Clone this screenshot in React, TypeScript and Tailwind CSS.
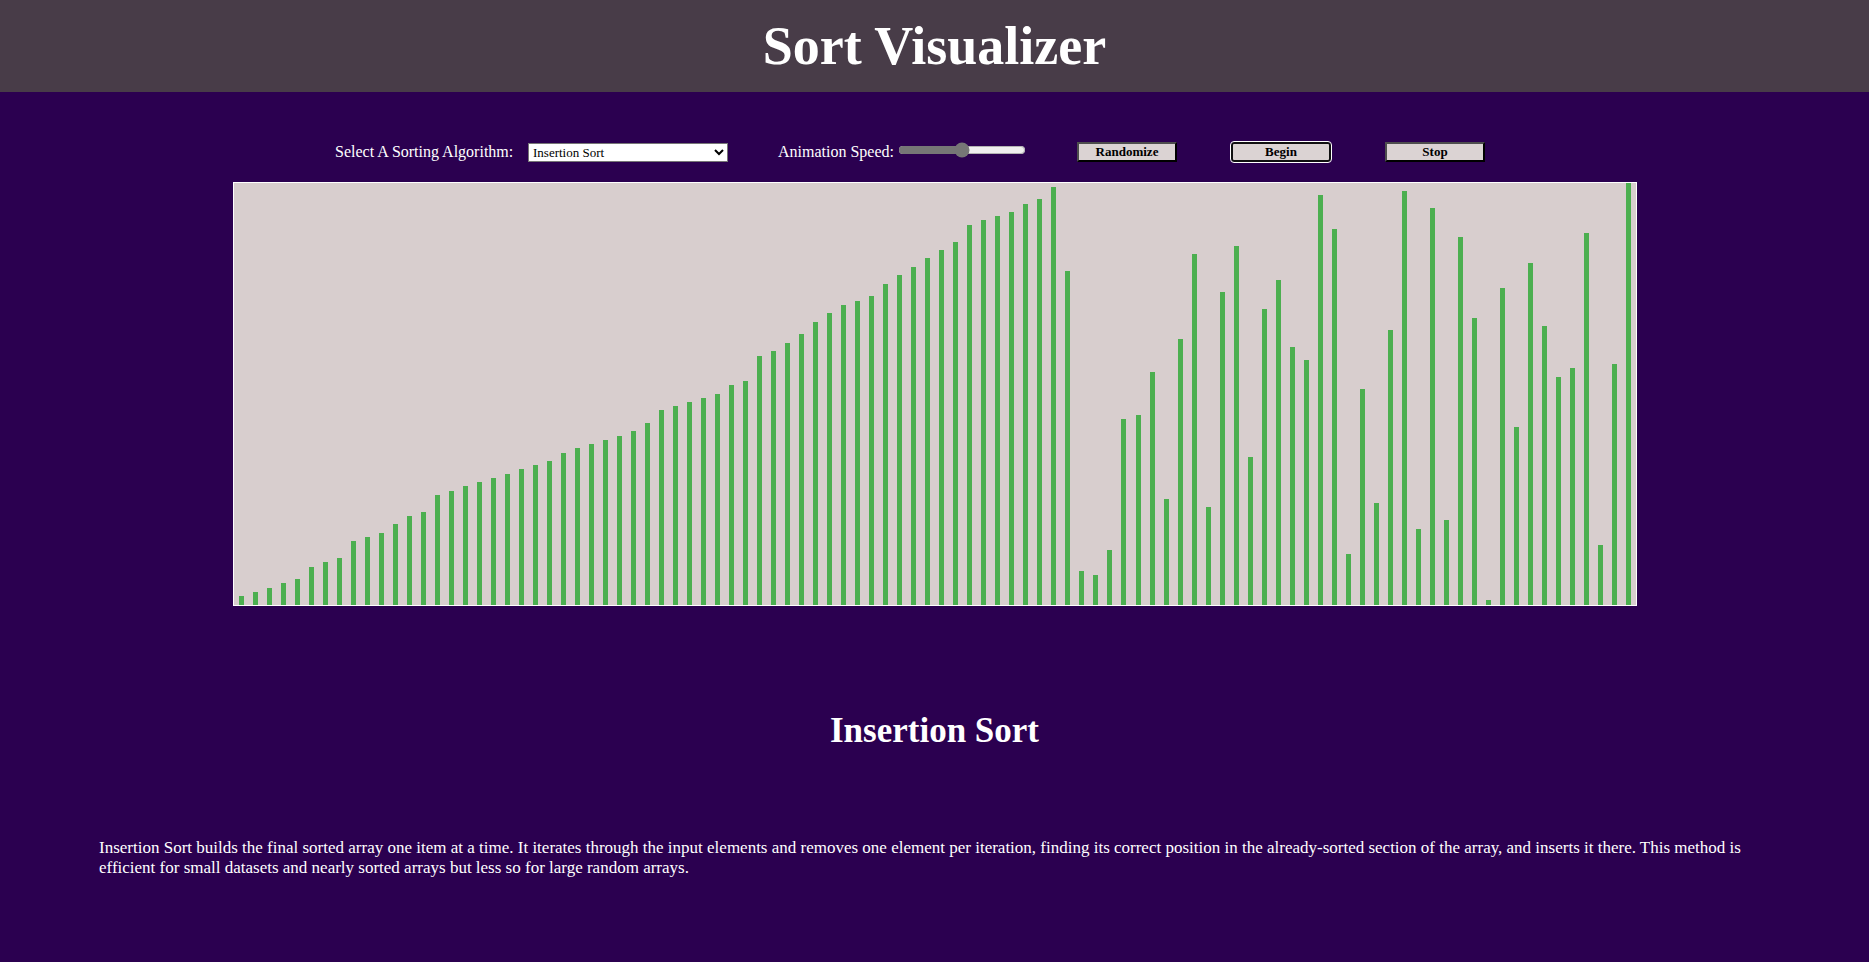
import React from "react";

const values = [
  2, 3, 4, 5, 6, 9, 10, 11, 15, 16, 17, 19, 21, 22, 26, 27, 28, 29, 30, 31,
  32, 33, 34, 36, 37, 38, 39, 40, 41, 43, 46, 47, 48, 49, 50, 52, 53, 59, 60, 62,
  64, 67, 69, 71, 72, 73, 76, 78, 80, 82, 84, 86, 90, 91, 92, 93, 95, 96, 99, 79,
  8, 7, 13, 44, 45, 55, 25, 63, 83, 23, 74, 85, 35, 70, 77, 61, 58, 97, 89, 12,
  51, 24, 65, 98, 18, 94, 20, 87, 68, 1, 75, 42, 81, 66, 54, 56, 88, 14, 57, 100,
];

const buttonClass =
  "h-5 w-[100px] border-2 border-t-[#4d4d4d] border-l-[#4d4d4d] border-r-black border-b-black bg-[#dbd3d3] text-[13px] leading-4 font-bold text-black";

function Header() {
  return (
    <header className="flex h-[92px] items-center justify-center bg-[#483c48]">
      <h1 className="text-[54px] leading-[60px] font-bold">Sort Visualizer</h1>
    </header>
  );
}

function Controls() {
  return (
    <div className="ml-[335px] flex h-5 items-center">
      <label htmlFor="algorithm" className="w-[193px] text-base leading-5">
        Select A Sorting Algorithm:
      </label>
      <select
        id="algorithm"
        defaultValue="Insertion Sort"
        className="h-[19px] w-[200px] border border-[#767676] bg-white text-[13px] leading-4 text-black"
      >
        <option>Bubble Sort</option>
        <option>Insertion Sort</option>
        <option>Selection Sort</option>
        <option>Merge Sort</option>
        <option>Quick Sort</option>
      </select>
      <label htmlFor="speed" className="ml-[50px] w-[120px] text-base leading-5">
        Animation Speed:
      </label>
      <input
        id="speed"
        type="range"
        min="0"
        max="100"
        defaultValue="50"
        className="mb-1 h-4 w-[128px] accent-[#767676]"
      />
      <div className="ml-[51px] flex gap-[54px]">
        <button className={buttonClass}>Randomize</button>
        <button className="h-5 w-[100px] rounded-[3px] border-2 border-[#101010] bg-[#dbd3d3] text-[13px] leading-4 font-bold text-black outline outline-white">
          Begin
        </button>
        <button className={buttonClass}>Stop</button>
      </div>
    </div>
  );
}

function Chart() {
  return (
    <div className="mx-[12.44%] mt-5 flex h-[424px] items-end justify-between border border-white bg-[#d8cece] pr-1 pl-[5px]">
      {values.map((value) => (
        <div
          key={value}
          className="w-[5px] bg-[#4caf50]"
          style={{ height: `${Math.min(value + 0.12, 100)}%` }}
        />
      ))}
    </div>
  );
}

export default function App() {
  return (
    <div className="min-h-screen bg-[#2b0050] font-['Liberation_Serif',serif] text-white">
      <Header />
      <main className="pt-[50px]">
        <Controls />
        <Chart />
        <h2 className="mt-[105px] text-center text-[35px] leading-10 font-bold">
          Insertion Sort
        </h2>
        <p className="mx-[99px] mt-[87px] text-[17px] leading-5">
          Insertion Sort builds the final sorted array one item at a time. It
          iterates through the input elements and removes one element per
          iteration, finding its correct position in the already-sorted section
          of the array, and inserts it there. This method is efficient for small
          datasets and nearly sorted arrays but less so for large random arrays.
        </p>
      </main>
    </div>
  );
}
